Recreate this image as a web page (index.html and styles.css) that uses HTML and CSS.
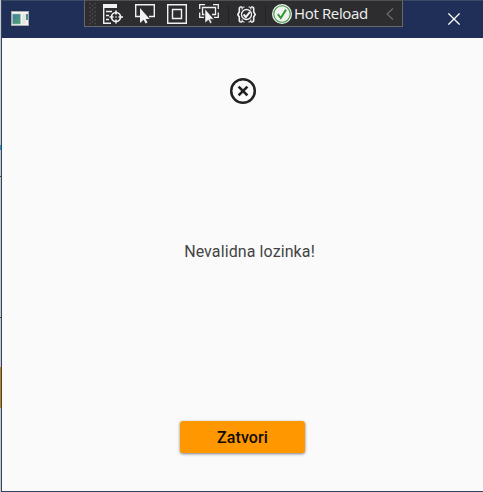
FILE: index.html
```html
<!DOCTYPE html>
<html lang="hr">
<head>
<meta charset="utf-8">
<title>Nevalidna lozinka</title>
<link rel="stylesheet" href="styles.css">
</head>
<body>
<div class="backdrop"><i class="edge-blue"></i><i class="edge-line"></i><i class="edge-line"></i><i class="edge-orange"></i></div>
<div class="window">
  <header class="titlebar">
    <svg class="app-icon" width="18" height="15" viewBox="0 0 18 15">
      <defs><linearGradient id="g" x1="0" y1="0" x2="1" y2="1"><stop offset="0" stop-color="#4779a8"/><stop offset="1" stop-color="#4fa56c"/></linearGradient></defs>
      <path fill="#aaa9a9" d="M0 0h18v15H0z"/><path fill="#f4f4f4" d="M1 1h16v13H1z"/>
      <path fill="url(#g)" stroke="#9cc4b4" stroke-width=".6" d="M1.5 3h8v10h-8z"/>
      <path fill="#e6e6e6" d="M11 3h4v10h-4z"/><path fill="url(#g)" d="M15 3h2v6h-2z"/>
    </svg>
    <svg class="close" width="12" height="12" viewBox="0 0 12 12"><path d="M.4.4l11.2 11.2M11.6.4L.4 11.6" fill="none" stroke="#fff" stroke-width="1.25"/></svg>
  </header>
  <main class="content">
    <svg class="error" width="28" height="28" viewBox="0 0 28 28" fill="none" stroke="#222"><circle cx="14" cy="14" r="11.8" stroke-width="2.5"/><path stroke-width="2.7" d="M9.6 9.6l8.8 8.8M18.4 9.6l-8.8 8.8"/></svg>
    <p class="message">Nevalidna lozinka!</p>
    <button class="dismiss">Zatvori</button>
  </main>
</div>
<div class="toolbar">
  <svg class="grip" width="8" height="22" viewBox="0 0 8 22"><path d="M1 0v22M6 0v22" stroke="#555557" stroke-width="1.3" stroke-dasharray="1.5 2.5"/><path d="M3.5 2v20" stroke="#505052" stroke-width="1.3" stroke-dasharray="1.5 2.5"/></svg>
  <svg class="tree" width="20" height="20" viewBox="0 0 20 20" fill="none" stroke="#f1f1f1">
    <path fill="#f1f1f1" stroke="none" d="M0 0h14v4H0z"/><path stroke-width="1.4" d="M.7 3v16.3H8M3 7.5h6M3 11.5h3M3 15.5h3"/><circle cx="13" cy="13" r="4.5" stroke-width="1.7"/><path stroke-width="1.6" d="M13 6.5v4M13 15.5v4M6.5 13h4M15.5 13H20"/><circle cx="13" cy="13" r=".8" stroke="none" fill="#f1f1f1"/>
  </svg>
  <svg class="select" width="20" height="20" viewBox="0 0 20 20">
    <path d="M5 12.5H.7V.7h18.6v11.8H14" fill="none" stroke="#f1f1f1" stroke-width="1.4"/><path fill="#f1f1f1" d="M5 4v15l3.7-3.3 1.8 3.8 2-1-1.8-3.6h4z"/>
  </svg>
  <svg class="adorn" width="20" height="20" viewBox="0 0 20 20" fill="none" stroke="#f1f1f1" stroke-width="1.4"><path d="M.7.7h18.6v18.6H.7z"/><path d="M5.5 5.5h9v9h-9z"/></svg>
  <svg class="track" width="20" height="20" viewBox="0 0 20 20">
    <path d="M6 .7H.7V5M14 .7h5.3V5M.7 8.5v4.8H5M19.3 8.5v4.8H15M5.5 10.5h-2v-7h13v7H13" fill="none" stroke="#f1f1f1" stroke-width="1.3"/><path fill="#f1f1f1" stroke="#2d2d30" stroke-width=".5" d="M6 5v14l3.4-3 1.8 3.5 1.8-1-1.8-3.3h3.7z"/>
  </svg>
  <i class="divider"></i>
  <svg class="bind" width="19" height="17" viewBox="0 0 19 17" fill="none" stroke="#f1f1f1" stroke-width="1.6">
    <path d="M5 1H3.8Q2.3 1 2.3 3v3L.8 8.5l1.5 2.5v3q0 2 1.5 2H5M14 1h1.2q1.5 0 1.5 2v3l1.5 2.5-1.5 2.5v3q0 2-1.5 2H14"/><path stroke-width="1.1" d="M7.5 1H6.8Q5 1 5 3.5M7.5 16h-.7Q5 16 5 13.5M11.5 1h.7Q14 1 14 3.5M11.5 16h.7q1.8 0 1.8-2.5"/><circle cx="9.5" cy="8.5" r="5" stroke-width="1.3"/><path stroke-width="2" d="M6.6 8.5l2.2 2.6 4-5"/>
  </svg>
  <i class="divider"></i>
  <svg class="ok" width="20" height="20" viewBox="0 0 20 20"><circle cx="10" cy="10" r="10" fill="#f1f1f1"/><circle cx="10" cy="10" r="8.2" fill="none" stroke="#339933" stroke-width="1.1"/><path d="M5.8 10.2l3 3.8 5.2-8.4" fill="none" stroke="#339933" stroke-width="2"/></svg>
  <span class="label">Hot Reload</span>
  <svg class="chevron" width="8" height="12" viewBox="0 0 8 12"><path d="M7 .5L1 6l6 5.5" fill="none" stroke="#707072" stroke-width="1.1"/></svg>
</div>
</body>
</html>
```
FILE: styles.css
```css
* { box-sizing: border-box; }
body { margin: 0; width: 483px; height: 492px; overflow: hidden; position: relative; display: flex; background: #c5c9ce; }
.backdrop { width: 1px; flex: none; display: flex; flex-direction: column; }
.backdrop i { display: block; width: 1px; }
.edge-blue { height: 5px; margin-top: 145px; background: #2498d5; }
.edge-line { height: 1px; margin-top: 26px; background: #444; }
.edge-line + .edge-line { margin-top: 140px; }
.edge-orange { height: 41px; margin-top: 49px; background: #d58000; }
.window { flex: 1; height: 492px; display: flex; flex-direction: column; border-left: 1px solid #34425f; border-bottom: 1px solid #34425f; background: #fafafa; }
.titlebar { height: 38px; flex: none; display: flex; align-items: center; justify-content: space-between; padding: 0 23px 0 9px; background: #202f57; border-top: 1px solid #394966; }
.app-icon { margin-top: -2px; }
.close { margin-top: -1px; }
.content { flex: 1; display: flex; flex-direction: column; align-items: center; padding: 39px 0 0; }
.error { display: block; }
.message { margin: 137px 0 0; padding-left: 14px; font: 400 16px/20px Roboto, sans-serif; color: #444; letter-spacing: .1px; }
.dismiss { width: 125px; height: 32px; margin: 159px 0 0; padding: 1px 0 0; border: 0; border-radius: 3px; background: #ff9800; color: #100b00; font: 500 16px/31px Roboto, sans-serif; letter-spacing: .1px; box-shadow: 0 1px 3px rgba(0,0,0,.5); }
.toolbar { position: absolute; left: 84px; top: 0; width: 319px; height: 27px; display: flex; align-items: flex-start; background: #2d2d30; border: 1px solid #686868; border-top-color: #505052; }
.toolbar svg { flex: none; display: block; margin-top: 3px; }
.toolbar .grip { margin: 2px 0 0 4px; }
.toolbar .tree { margin-left: 6px; }
.toolbar .select, .toolbar .adorn, .toolbar .track { margin-left: 12px; }
.divider { width: 1px; height: 18px; margin: 4px 0 0 9px; background: #222224; }
.toolbar .bind { margin: 5px 0 0 8px; }
.toolbar .divider + .ok { margin-left: 6px; }
.label { width: 76px; margin-left: 2px; white-space: nowrap; font: 15px/25px "Open Sans", sans-serif; letter-spacing: -.35px; color: #f1f1f1; }
.toolbar .chevron { margin: 7px 0 0 16px; }
```
